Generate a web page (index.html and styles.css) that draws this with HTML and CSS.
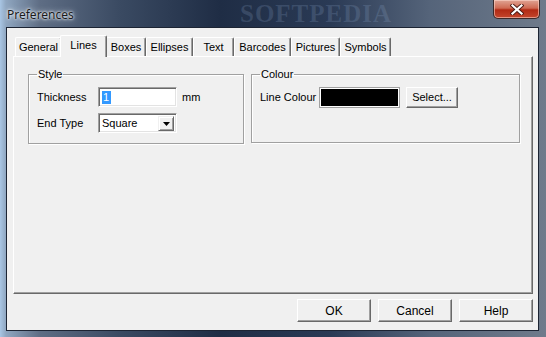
FILE: index.html
```html
<!DOCTYPE html>
<html lang="en">
<head>
    <meta charset="UTF-8">
    <title>Preferences</title>
    <link rel="stylesheet" href="styles.css">
</head>
<body>

    <div class="window">
        <div class="titlebar">
            <span class="title">Preferences</span>
            <span class="watermark">SOFTPEDIA</span>
            <button class="close" type="button">
                <svg width="14" height="11" viewBox="0 0 14 11">
                    <path d="M2.5 1.5 L11.5 9.5 M11.5 1.5 L2.5 9.5" stroke="#4a1a14" stroke-width="4" stroke-linecap="square"/>
                    <path d="M2.5 1.5 L11.5 9.5 M11.5 1.5 L2.5 9.5" stroke="#ffffff" stroke-width="2.2" stroke-linecap="square"/>
                </svg>
            </button>
        </div>

        <div class="client">
            <div class="tabs">
                <div class="tab w-general">General</div>
                <div class="tab active w-lines">Lines</div>
                <div class="tab w-boxes">Boxes</div>
                <div class="tab w-ellipses">Ellipses</div>
                <div class="tab w-text">Text</div>
                <div class="tab w-barcodes">Barcodes</div>
                <div class="tab w-pictures">Pictures</div>
                <div class="tab w-symbols">Symbols</div>
            </div>

            <div class="panel">
                <fieldset class="group group-style">
                    <legend>Style</legend>
                    <div class="row">
                        <label class="lbl">Thickness</label>
                        <div class="field"><span class="sel">1</span></div>
                        <span class="unit">mm</span>
                    </div>
                    <div class="row">
                        <label class="lbl">End Type</label>
                        <div class="field combo">
                            <span>Square</span>
                            <span class="drop">
                                <svg width="7" height="4" viewBox="0 0 7 4"><path d="M0 0 H7 L3.5 4 Z" fill="#000"/></svg>
                            </span>
                        </div>
                    </div>
                </fieldset>

                <fieldset class="group group-colour">
                    <legend>Colour</legend>
                    <div class="row">
                        <label class="lbl lbl-colour">Line Colour</label>
                        <div class="swatch"></div>
                        <button class="btn btn-select" type="button">Select...</button>
                    </div>
                </fieldset>
            </div>

            <div class="actions">
                <button class="btn btn-main" type="button">OK</button>
                <button class="btn btn-main" type="button">Cancel</button>
                <button class="btn btn-main" type="button">Help</button>
            </div>
        </div>
    </div>

</body>
</html>
```

FILE: styles.css
```css
body {
    margin: 0;
    padding: 0;
    font-family: "Liberation Sans", Arial, sans-serif;
    font-size: 11px;
    color: #000;
    background: #6d7a8c;
}
.window {
    width: 546px;
    height: 337px;
    box-sizing: border-box;
    padding: 0 7px 6px 6px;
    display: flex;
    flex-direction: column;
    background: linear-gradient(90deg, #a9c6e4 0px, #8fa6c0 6px, #5e6d84 40px, #3a4a62 120px, #1f2d45 220px, #2a3a55 330px, #55647a 430px, #6f7b8b 546px);
    overflow: hidden;
}
.titlebar {
    height: 27px;
    position: relative;
    display: flex;
    align-items: center;
}
.title {
    margin-left: 1px;
    margin-top: 1px;
    font-family: "Noto Sans", "Liberation Sans", sans-serif;
    font-size: 12px;
    color: #1a1a1a;
    text-shadow: 0 0 6px #dfe6ee, 0 0 3px #dfe6ee, 0 0 2px #e8eef4;
}
.watermark {
    position: absolute;
    left: 234px;
    top: 0;
    line-height: 27px;
    font-family: "Liberation Serif", serif;
    font-size: 25px;
    font-weight: bold;
    letter-spacing: 1px;
    color: rgba(140, 165, 200, 0.22);
}
.close {
    position: absolute;
    right: -1px;
    top: 0;
    width: 47px;
    height: 19px;
    padding: 0;
    border: 1px solid #3b2a2a;
    border-top: 0;
    border-radius: 0 0 5px 5px;
    background: linear-gradient(#e0a494 0%, #cf6a53 45%, #b12a14 55%, #c4462c 100%);
    box-shadow: inset 0 0 0 1px rgba(255, 220, 210, 0.55);
    display: flex;
    align-items: center;
    justify-content: center;
}
.client {
    flex: 1;
    background: #f0f0f0;
    border: 1px solid #1c2433;
    box-sizing: border-box;
    padding: 7px 5px 0 6px;
    display: flex;
    flex-direction: column;
}
.tabs {
    display: flex;
    height: 21px;
    padding-left: 2px;
    align-items: flex-end;
}
.tab {
    height: 19px;
    box-sizing: border-box;
    background: #f0f0f0;
    border-left: 1px solid #fff;
    border-top: 1px solid #fff;
    border-right: 1px solid #696969;
    box-shadow: inset -1px 0 0 #a0a0a0;
    border-radius: 2px 2px 0 0;
    padding-top: 3px;
    text-align: center;
    white-space: nowrap;
}
.tab.active {
    height: 22px;
    margin: 0 -1px -1px -2px;
    padding-top: 3px;
    position: relative;
    z-index: 1;
}
.w-general { width: 47px; }
.w-lines { width: 47px; }
.w-boxes { width: 40px; }
.w-ellipses { width: 47px; }
.w-text { width: 41px; }
.w-barcodes { width: 57px; }
.w-pictures { width: 49px; }
.w-symbols { width: 51px; }
.panel {
    height: 238px;
    box-sizing: border-box;
    border-top: 1px solid #fff;
    border-left: 1px solid #fff;
    border-right: 1px solid #696969;
    border-bottom: 1px solid #696969;
    box-shadow: inset -1px -1px 0 #a0a0a0;
    display: flex;
    align-items: flex-start;
    gap: 7px;
    padding: 11px 0 0 14px;
}
.group {
    margin: 0;
    padding: 7px 0 0 8px;
    border: 1px solid #a0a0a0;
    box-shadow: 1px 1px 0 #fff, inset 1px 1px 0 #fff;
    box-sizing: border-box;
}
.group legend {
    padding: 0 1px;
    margin-left: 0;
}
.group-style {
    width: 216px;
    height: 76px;
}
.group-colour {
    width: 269px;
    height: 75px;
}
.row {
    display: flex;
    align-items: center;
    height: 20px;
    margin-bottom: 6px;
}
.lbl {
    width: 61px;
}
.lbl-colour {
    width: 60px;
}
.field {
    width: 79px;
    height: 20px;
    box-sizing: border-box;
    background: #fff;
    border-top: 1px solid #a0a0a0;
    border-left: 1px solid #a0a0a0;
    border-right: 1px solid #fff;
    border-bottom: 1px solid #fff;
    box-shadow: inset 1px 1px 0 #696969, inset -1px -1px 0 #e3e3e3;
    padding: 3px 0 0 3px;
}
.sel {
    background: #3399ff;
    color: #fff;
    padding: 0 2px 1px 1px;
}
.unit {
    margin-left: 5px;
}
.combo {
    display: flex;
    justify-content: space-between;
    padding-top: 2px;
    padding-right: 2px;
}
.combo span:first-child {
    padding-top: 1px;
}
.drop {
    width: 16px;
    height: 15px;
    box-sizing: border-box;
    background: #f0f0f0;
    border-top: 1px solid #f0f0f0;
    border-left: 1px solid #f0f0f0;
    border-right: 1px solid #696969;
    border-bottom: 1px solid #696969;
    box-shadow: inset 1px 1px 0 #fff, inset -1px -1px 0 #a0a0a0;
    display: flex;
    align-items: center;
    justify-content: center;
}
.swatch {
    width: 79px;
    height: 19px;
    box-sizing: border-box;
    background: #000;
    border: 1px solid #fff;
    box-shadow: 0 0 0 1px #a0a0a0;
}
.btn {
    font-family: "Liberation Sans", Arial, sans-serif;
    font-size: 11px;
    color: #000;
    background: #f0f0f0;
    border-top: 1px solid #fff;
    border-left: 1px solid #fff;
    border-right: 1px solid #696969;
    border-bottom: 1px solid #696969;
    box-shadow: inset -1px -1px 0 #a0a0a0;
    padding: 0;
}
.btn-select {
    width: 52px;
    height: 21px;
    margin-left: 7px;
}
.actions {
    display: flex;
    justify-content: flex-end;
    gap: 7px;
    padding: 5px 0 0 0;
}
.btn-main {
    width: 74px;
    height: 23px;
    font-size: 12px;
}
```
